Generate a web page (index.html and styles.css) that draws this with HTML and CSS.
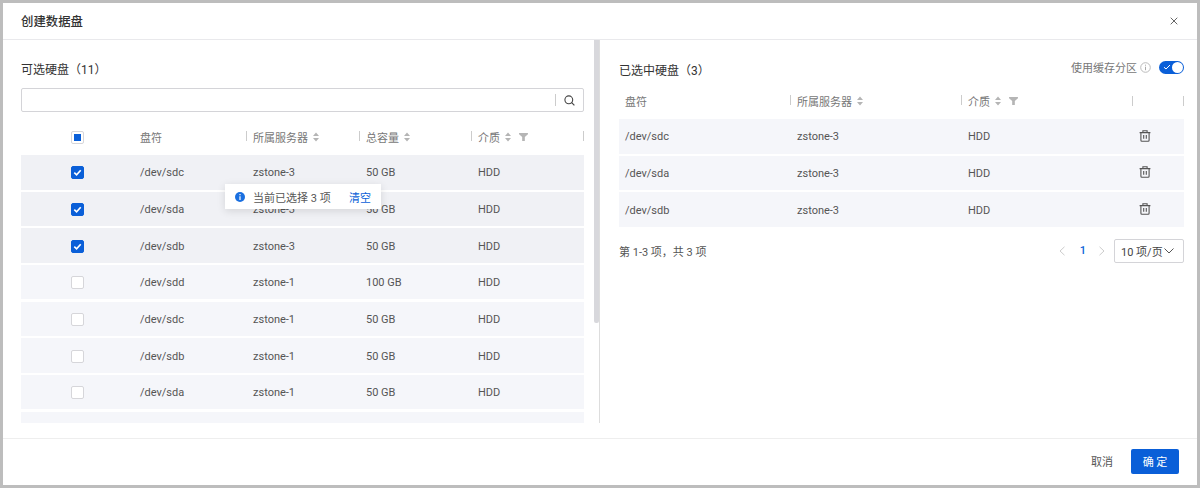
FILE: index.html
```html
<!DOCTYPE html>
<html lang="zh-CN">
<head>
  <meta charset="UTF-8">
  <meta name="viewport" content="width=device-width, initial-scale=1.0">
  <title>创建数据盘</title>
  <link rel="stylesheet" href="styles.css">
</head>
<body>
  <svg class="svg_defs" width="0" height="0">
    <symbol id="sort" viewBox="0 0 8 12"><path d="M4 1.500 7 5H1zM4 10.500 1 7h6z"/></symbol>
    <symbol id="filter" viewBox="0 0 10 9"><path d="M0 0h10v1.500L6.500 4.500V9h-3V4.500L0 1.500z"/></symbol>
    <symbol id="check" viewBox="0 0 12 12"><path d="M2.500 6.200 5 8.600 9.500 3.600" fill="none" stroke="#fff" stroke-width="1.800"/></symbol>
    <symbol id="trash" viewBox="0 0 12 12"><path d="M.6 2.600h10.800M3.900 2.400V.7h4.200v1.700M1.900 2.600v7.700q0 1 1 1h6.200q1 0 1-1V2.600M4.700 5v3.800M7.300 5v3.800" fill="none" stroke="currentColor" stroke-width="1.100"/></symbol>
  </svg>

  <div class="modal">
    <div class="modal_header">
      <span class="modal_title">创建数据盘</span>
      <svg class="modal_close" width="8" height="8" viewBox="0 0 8 8"><path d="M.7.7l6.600 6.600M7.300.7.7 7.300" stroke="#666" stroke-width="1" fill="none"/></svg>
    </div>

    <div class="modal_body">
      <div class="panel_left">
        <div class="panel_title">可选硬盘（11）</div>
        <div class="search_box">
          <span class="search_btn">
            <svg width="11" height="11" viewBox="0 0 11 11"><circle cx="4.800" cy="4.800" r="3.900" fill="none" stroke="#444" stroke-width="1.100"/><path d="M7.700 7.700 10.400 10.400" stroke="#444" stroke-width="1.200"/></svg>
          </span>
        </div>
        <div class="tbl_head left_cols">
          <div class="head_cell head_check"><span class="checkbox half"><i></i></span></div>
          <div class="head_cell">盘符</div>
          <div class="head_cell sep">所属服务器<svg class="ic_sort"><use href="#sort"/></svg></div>
          <div class="head_cell sep">总容量<svg class="ic_sort"><use href="#sort"/></svg></div>
          <div class="head_cell sep end_sep">介质<svg class="ic_sort"><use href="#sort"/></svg><svg class="ic_filter"><use href="#filter"/></svg></div>
        </div>
        <div class="tbl_body">
          <div class="tbl_row left_cols selected"><div class="cell_check"><span class="checkbox on"><svg><use href="#check"/></svg></span></div><div>/dev/sdc</div><div>zstone-3</div><div>50 GB</div><div>HDD</div></div>
          <div class="tbl_row left_cols selected"><div class="cell_check"><span class="checkbox on"><svg><use href="#check"/></svg></span></div><div>/dev/sda</div><div>zstone-3</div><div>50 GB</div><div>HDD</div></div>
          <div class="tbl_row left_cols selected"><div class="cell_check"><span class="checkbox on"><svg><use href="#check"/></svg></span></div><div>/dev/sdb</div><div>zstone-3</div><div>50 GB</div><div>HDD</div></div>
          <div class="tbl_row left_cols"><div class="cell_check"><span class="checkbox"></span></div><div>/dev/sdd</div><div>zstone-1</div><div>100 GB</div><div>HDD</div></div>
          <div class="tbl_row left_cols"><div class="cell_check"><span class="checkbox"></span></div><div>/dev/sdc</div><div>zstone-1</div><div>50 GB</div><div>HDD</div></div>
          <div class="tbl_row left_cols"><div class="cell_check"><span class="checkbox"></span></div><div>/dev/sdb</div><div>zstone-1</div><div>50 GB</div><div>HDD</div></div>
          <div class="tbl_row left_cols"><div class="cell_check"><span class="checkbox"></span></div><div>/dev/sda</div><div>zstone-1</div><div>50 GB</div><div>HDD</div></div>
          <div class="tbl_row left_cols"></div>
        </div>
        <div class="select_tip">
          <svg width="10" height="10" viewBox="0 0 10 10"><circle cx="5" cy="5" r="5" fill="#1a6fe0"/><path d="M5 2v1.200M5 4.300V8" stroke="#fff" stroke-width="1.200"/></svg>
          <span class="select_tip_text">当前已选择 3 项</span>
          <a class="select_tip_link" href="#">清空</a>
        </div>
        <div class="scroll_thumb"></div>
      </div>

      <div class="panel_right">
        <div class="panel_top">
          <div class="panel_title">已选中硬盘（3）</div>
          <div class="cache_opt">
            <span>使用缓存分区</span>
            <svg width="11" height="11" viewBox="0 0 11 11"><circle cx="5.500" cy="5.500" r="4.800" fill="none" stroke="#bbb"/><path d="M5.500 2.700v1M5.500 4.700v3.500" stroke="#aaa"/></svg>
            <span class="switch"><svg width="8" height="8" viewBox="0 0 8 8"><path d="M1 4.200 3 6 7 2" fill="none" stroke="#fff" stroke-width="1"/></svg><i></i></span>
          </div>
        </div>
        <div class="tbl_head right_cols">
          <div class="head_cell first_cell">盘符</div>
          <div class="head_cell sep">所属服务器<svg class="ic_sort"><use href="#sort"/></svg></div>
          <div class="head_cell sep">介质<svg class="ic_sort"><use href="#sort"/></svg><svg class="ic_filter"><use href="#filter"/></svg></div>
          <div class="head_cell sep end_sep"></div>
        </div>
        <div class="tbl_row right_cols"><div class="first_cell">/dev/sdc</div><div>zstone-3</div><div>HDD</div><div class="cell_del"><svg class="ic_trash"><use href="#trash"/></svg></div></div>
        <div class="tbl_row right_cols"><div class="first_cell">/dev/sda</div><div>zstone-3</div><div>HDD</div><div class="cell_del"><svg class="ic_trash"><use href="#trash"/></svg></div></div>
        <div class="tbl_row right_cols"><div class="first_cell">/dev/sdb</div><div>zstone-3</div><div>HDD</div><div class="cell_del"><svg class="ic_trash"><use href="#trash"/></svg></div></div>
        <div class="pager">
          <span class="pager_total">第 1-3 项，共 3 项</span>
          <div class="pager_ctrl">
            <svg width="6" height="10" viewBox="0 0 6 10"><path d="M5.500.8 1 5l4.500 4.200" fill="none" stroke="#ccc"/></svg>
            <span class="pager_num">1</span>
            <svg width="6" height="10" viewBox="0 0 6 10"><path d="M.5.8 5 5 .5 9.200" fill="none" stroke="#ccc"/></svg>
            <span class="pager_size">10 项/页<svg width="10" height="6" viewBox="0 0 10 6"><path d="M.5.5 5 5 9.500.5" fill="none" stroke="#555"/></svg></span>
          </div>
        </div>
      </div>
    </div>

    <div class="modal_footer">
      <a class="btn_cancel" href="#">取消</a>
      <a class="btn_ok" href="#">确 定</a>
    </div>
  </div>
</body>
</html>
```

FILE: styles.css
```css
* {
  box-sizing: border-box;
}
html, body {
  height: 100%;
}
body {
  margin: 0;
  padding: 3px;
  overflow: hidden;
  background-color: #bdbdbd;
  font-family: "Roboto", "Noto Sans CJK SC", sans-serif;
  font-size: 11px;
  color: #555;
}
a {
  text-decoration: none;
}
.svg_defs {
  position: absolute;
}
.modal {
  display: flex;
  flex-direction: column;
  height: 482px;
  background-color: #fff;
}
.modal_header {
  display: flex;
  align-items: center;
  justify-content: space-between;
  flex: none;
  height: 37px;
  padding: 0 19px 0 18px;
  border-bottom: 1px solid #e9e9ec;
}
.modal_title {
  font-size: 12.4px;
  font-weight: 500;
  color: #333;
}
.modal_body {
  display: flex;
  height: 383px;
  flex: none;
}
.panel_left {
  position: relative;
  width: 597px;
  padding: 0 15px 0 18px;
  border-right: 1px solid #ddd;
}
.panel_title {
  font-size: 12px;
  color: #333;
}
.panel_left .panel_title {
  display: flex;
  align-items: center;
  height: 48px;
  padding-top: 8px;
}
.search_box {
  display: flex;
  justify-content: flex-end;
  align-items: center;
  height: 24px;
  border: 1px solid #d4d4d8;
  border-radius: 2px;
}
.search_btn {
  display: flex;
  align-items: center;
  justify-content: center;
  width: 28px;
  height: 12px;
  border-left: 1px solid #ccc;
}
.left_cols {
  grid-template-columns: 112px 113px 113px 112px 113px;
}
.right_cols {
  grid-template-columns: 171px 171px 171px 52px;
}
.tbl_head {
  display: grid;
  align-items: center;
  color: #777;
}
.panel_left .tbl_head {
  height: 43px;
  padding-top: 7px;
}
.panel_right .tbl_head {
  height: 36px;
}
.head_cell {
  position: relative;
  display: flex;
  align-items: center;
  min-height: 14px;
  padding-left: 7px;
}
.head_check {
  justify-content: center;
  padding-left: 0;
}
.sep::before {
  content: "";
  position: absolute;
  left: 0;
  top: 2px;
  width: 1px;
  height: 10px;
  background-color: #ccc;
}
.end_sep::after {
  content: "";
  position: absolute;
  right: 0;
  top: 2px;
  width: 1px;
  height: 10px;
  background-color: #ccc;
}
.ic_sort {
  width: 8px;
  height: 12px;
  margin-left: 4px;
  fill: #b5b5b5;
}
.ic_filter {
  width: 9px;
  height: 8px;
  margin-left: 7px;
  fill: #b5b5b5;
}
.tbl_body {
  height: 268px;
  overflow: hidden;
}
.tbl_row {
  display: grid;
  align-items: center;
  height: 34.5px;
  margin-bottom: 2.17px;
  padding-top: 1px;
  background-color: #f5f6fa;
}
.tbl_row > div {
  padding-left: 7px;
}
.tbl_row > .first_cell, .first_cell {
  padding-left: 6px;
}
.tbl_row.selected {
  background-color: #f0f1f5;
}
.tbl_row > .cell_check {
  display: flex;
  justify-content: center;
  padding-left: 0;
}
.checkbox {
  display: flex;
  align-items: center;
  justify-content: center;
  width: 13px;
  height: 13px;
  background-color: #fff;
  border: 1px solid #d6d6da;
  border-radius: 2px;
}
.checkbox.on {
  background-color: #0a5fd8;
  border-color: #0a5fd8;
}
.checkbox svg {
  width: 11px;
  height: 11px;
}
.checkbox.half i {
  display: block;
  width: 7px;
  height: 7px;
  background-color: #0a5fd8;
}
.select_tip {
  position: absolute;
  left: 222px;
  top: 144px;
  display: flex;
  align-items: center;
  width: 156px;
  height: 25px;
  padding-left: 10px;
  background-color: #fff;
  box-shadow: 0 2px 8px rgba(0,0,0,0.12);
}
.select_tip_text {
  margin-left: 8px;
  width: 96px;
}
.select_tip_link {
  color: #0a5fd8;
}
.scroll_thumb {
  position: absolute;
  right: 0;
  top: 0;
  width: 5px;
  height: 283px;
  background-color: #d8d8dc;
  border-radius: 0 0 2px 2px;
}
.panel_right {
  flex: 1;
  padding: 0 13px 0 19px;
}
.panel_top {
  display: flex;
  align-items: center;
  justify-content: space-between;
  height: 43px;
  padding-top: 15px;
}
.cache_opt {
  display: flex;
  align-items: center;
  margin-top: -4px;
  color: #777;
}
.cache_opt > svg {
  margin: 0 8px 0 3px;
}
.switch {
  display: flex;
  align-items: center;
  justify-content: space-between;
  width: 25px;
  height: 13px;
  padding: 0 1px 0 4px;
  background-color: #0a5fd8;
  border-radius: 7px;
}
.switch i {
  display: block;
  width: 11px;
  height: 11px;
  background-color: #fff;
  border-radius: 50%;
}
.cell_del {
  display: flex;
  color: #555;
}
.ic_trash {
  width: 12px;
  height: 12px;
  margin-bottom: 2px;
}
.pager {
  display: flex;
  align-items: center;
  justify-content: space-between;
  height: 26px;
  margin-top: 11px;
}
.pager_ctrl {
  display: flex;
  align-items: center;
}
.pager_num {
  margin: 0 13px 0 15px;
  font-weight: 500;
  color: #0a5fd8;
}
.pager_size {
  display: flex;
  align-items: center;
  justify-content: space-between;
  width: 70px;
  height: 24px;
  margin-left: 9px;
  padding: 0 9px 0 6px;
  color: #444;
  white-space: nowrap;
  border: 1px solid #d4d4d8;
  border-radius: 2px;
}
.modal_footer {
  display: flex;
  align-items: center;
  justify-content: flex-end;
  flex: 1;
  margin-top: 15px;
  padding: 0 18px 2px 0;
  border-top: 1px solid #eee;
}
.btn_cancel {
  margin-right: 18px;
  color: #555;
}
.btn_ok {
  display: flex;
  align-items: center;
  justify-content: center;
  width: 48px;
  height: 25px;
  color: #fff;
  background-color: #0a5fd8;
  border-radius: 2px;
}
```
